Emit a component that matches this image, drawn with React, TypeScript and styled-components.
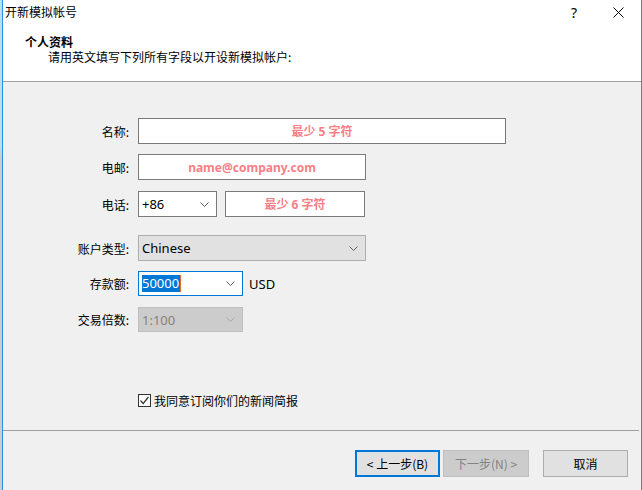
import React from "react";
import styled, { createGlobalStyle } from "styled-components";

const Global = createGlobalStyle`
  html, body { margin: 0; padding: 0; }
  body {
    width: 642px; height: 490px; overflow: hidden;
    font-family: "Noto Sans CJK SC", "Noto Sans", sans-serif;
    font-size: 12px; color: #000;
  }
  * { box-sizing: border-box; }
`;

const Screen = styled.div`
  display: flex;
  width: 642px;
  height: 490px;
`;

const Behind = styled.div`
  width: 2px;
  height: 100%;
  background: linear-gradient(#b9dfe9 0%, #b9dfe9 30%, #c8cdd2 32%, #c8cdd2 100%);
`;

const Window = styled.div`
  width: 640px;
  height: 490px;
  border-left: 1px solid #2f8cec;
  border-right: 1px solid #2f8cec;
  display: flex;
  flex-direction: column;
  background: #f0f0f0;
`;

const Header = styled.div`
  height: 82px;
  background: #fff;
  border-bottom: 1px solid #a0a0a0;
  display: flex;
  flex-direction: column;
`;

const TitleBar = styled.div`
  height: 24px;
  display: flex;
  align-items: center;
  padding-left: 2px;
`;

const Title = styled.div`
  flex: 1;
  line-height: 16px;
`;

const HelpGlyph = styled.div`
  width: 20px;
  text-align: center;
  font-family: "Noto Sans", sans-serif;
  font-size: 14px;
  margin-right: 24px;
`;

const CloseBtn = styled.div`
  width: 20px;
  display: flex;
  justify-content: center;
  margin-right: 13px;
`;

const Heading = styled.div`
  margin-top: 10px;
  padding-left: 22px;
  font-weight: bold;
  line-height: 15px;
`;

const SubHeading = styled.div`
  padding-left: 45px;
  line-height: 16px;
`;

const Body = styled.div`
  height: 349px;
  padding-top: 36px;
  border-bottom: 1px solid #a0a0a0;
  margin-right: 2px;
  display: flex;
  flex-direction: column;
`;

const Row = styled.div<{ $top?: number; $h?: number }>`
  display: flex;
  align-items: center;
  height: ${(p) => p.$h ?? 26}px;
  margin-top: ${(p) => p.$top ?? 0}px;
`;

const Label = styled.div`
  width: 126px;
  margin-right: 9px;
  text-align: right;
  white-space: nowrap;
`;

const TextBox = styled.div<{ $w: number }>`
  width: ${(p) => p.$w}px;
  height: 100%;
  border: 1px solid #7a7a7a;
  background: #fff;
  display: flex;
  align-items: center;
  justify-content: center;
`;

const Hint = styled.span`
  color: #f77f86;
  font-weight: bold;
  font-family: "Noto Sans", "Noto Sans CJK SC", sans-serif;
  font-size: 12px;
`;

const Select = styled.div<{ $w: number; $kind: "plain" | "grey" | "focus" | "disabled"; $ml?: number }>`
  width: ${(p) => p.$w}px;
  height: 100%;
  margin-left: ${(p) => p.$ml ?? 0}px;
  display: flex;
  align-items: center;
  padding: 0 7px 0 3px;
  font-family: "Noto Sans", "Noto Sans CJK SC", sans-serif;
  font-size: 13px;
  border: 1px solid
    ${(p) =>
      p.$kind === "plain" ? "#7a7a7a" : p.$kind === "grey" ? "#adadad" : p.$kind === "focus" ? "#0078d7" : "#bfbfbf"};
  background: ${(p) =>
    p.$kind === "grey" ? "#e1e1e1" : p.$kind === "disabled" ? "#cccccc" : "#fff"};
  color: ${(p) => (p.$kind === "disabled" ? "#838383" : "#000")};
`;

const SelectText = styled.div`
  flex: 1;
  display: flex;
  align-items: center;
  white-space: nowrap;
`;

const Selected = styled.span`
  background: #0078d7;
  color: #fff;
  line-height: 17px;
  padding: 0 1px 0 0;
`;

const Caret = styled.span`
  display: inline-block;
  width: 1px;
  height: 17px;
  background: #e06a2a;
`;

const Unit = styled.span`
  margin-left: 6px;
  font-family: "Noto Sans", sans-serif;
  font-size: 13px;
`;

const CheckRow = styled.div`
  margin-top: 62px;
  padding-left: 135px;
  display: flex;
  align-items: center;
  gap: 3px;
  height: 13px;
`;

const Box = styled.div`
  width: 13px;
  height: 13px;
  border: 1px solid #333;
  background: #fff;
  display: flex;
  align-items: center;
  justify-content: center;
`;

const Footer = styled.div`
  flex: 1;
  display: flex;
  justify-content: flex-end;
  align-items: flex-start;
  padding: 19px 13px 0 0;
`;

const Button = styled.button<{ $kind: "focus" | "disabled" | "normal"; $w: number; $ml?: number }>`
  width: ${(p) => p.$w}px;
  height: 27px;
  margin-left: ${(p) => p.$ml ?? 0}px;
  padding: 0;
  font-family: "Noto Sans CJK SC", "Noto Sans", sans-serif;
  font-size: 12px;
  background: ${(p) => (p.$kind === "disabled" ? "#cccccc" : "#e1e1e1")};
  color: ${(p) => (p.$kind === "disabled" ? "#838383" : "#000")};
  border: ${(p) =>
    p.$kind === "focus" ? "2px solid #0078d7" : p.$kind === "disabled" ? "1px solid #bfbfbf" : "1px solid #adadad"};
`;

const Chevron = ({ color = "#606060" }: { color?: string }) => (
  <svg width="9" height="5" viewBox="0 0 9 5">
    <polyline points="0.5,0.5 4.5,4.5 8.5,0.5" fill="none" stroke={color} strokeWidth="1" />
  </svg>
);

export default function App() {
  return (
    <>
      <Global />
      <Screen>
        <Behind />
        <Window>
          <Header>
            <TitleBar>
              <Title>开新模拟帐号</Title>
              <HelpGlyph>?</HelpGlyph>
              <CloseBtn>
                <svg width="11" height="11" viewBox="0 0 11 11">
                  <path d="M0.5 0.5 L10.5 10.5 M10.5 0.5 L0.5 10.5" stroke="#000" strokeWidth="1" />
                </svg>
              </CloseBtn>
            </TitleBar>
            <Heading>个人资料</Heading>
            <SubHeading>请用英文填写下列所有字段以开设新模拟帐户:</SubHeading>
          </Header>
          <Body>
            <Row>
              <Label>名称:</Label>
              <TextBox $w={368}>
                <Hint>最少 5 字符</Hint>
              </TextBox>
            </Row>
            <Row $top={10}>
              <Label>电邮:</Label>
              <TextBox $w={228}>
                <Hint>name@company.com</Hint>
              </TextBox>
            </Row>
            <Row $top={11}>
              <Label>电话:</Label>
              <Select $w={79} $kind="plain">
                <SelectText>+86</SelectText>
                <Chevron />
              </Select>
              <Select $w={140} $kind="plain" $ml={8} style={{ justifyContent: "center", padding: 0 }}>
                <Hint>最少 6 字符</Hint>
              </Select>
            </Row>
            <Row $top={18}>
              <Label>账户类型:</Label>
              <Select $w={228} $kind="grey">
                <SelectText>Chinese</SelectText>
                <Chevron />
              </Select>
            </Row>
            <Row $top={10} $h={25}>
              <Label>存款额:</Label>
              <Select $w={105} $kind="focus">
                <SelectText>
                  <Selected>50000</Selected>
                  <Caret />
                </SelectText>
                <Chevron />
              </Select>
              <Unit>USD</Unit>
            </Row>
            <Row $top={11} $h={25}>
              <Label>交易倍数:</Label>
              <Select $w={105} $kind="disabled">
                <SelectText>1:100</SelectText>
                <Chevron color="#a8a8a8" />
              </Select>
            </Row>
            <CheckRow>
              <Box>
                <svg width="11" height="11" viewBox="0 0 11 11">
                  <polyline points="1.5,5.5 4.2,8.5 9.5,2" fill="none" stroke="#333" strokeWidth="1.2" />
                </svg>
              </Box>
              <span>我同意订阅你们的新闻简报</span>
            </CheckRow>
          </Body>
          <Footer>
            <Button $kind="focus" $w={85}>&lt; 上一步(B)</Button>
            <Button $kind="disabled" $w={86} $ml={3}>下一步(N) &gt;</Button>
            <Button $kind="normal" $w={85} $ml={14}>取消</Button>
          </Footer>
        </Window>
      </Screen>
    </>
  );
}
